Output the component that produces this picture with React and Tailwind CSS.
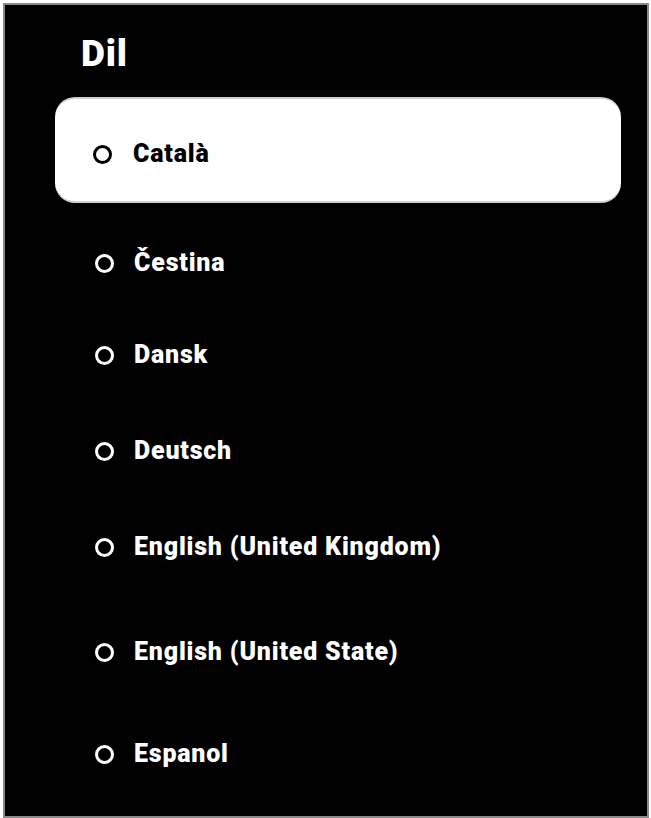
import React from "react";

const languages = [
  { name: "Català", selected: true },
  { name: "Čestina", space: "mt-[40px]" },
  { name: "Dansk", space: "mt-[52px]" },
  { name: "Deutsch", space: "mt-[56px]" },
  { name: "English (United Kingdom)", space: "mt-[56px]" },
  { name: "English (United State)", space: "mt-[65px]" },
  { name: "Espanol", space: "mt-[62px]" },
];

function Radio({ dark }) {
  return (
    <span
      className={`inline-block w-[19px] h-[19px] rounded-full border-[3.5px] shrink-0 ${
        dark ? "border-black" : "border-white"
      }`}
    />
  );
}

export default function App() {
  return (
    <div className="min-h-screen bg-white pt-[3px] pl-[3px]" style={{ fontFamily: "Roboto, 'Liberation Sans', sans-serif" }}>
      <div className="w-[646px] h-[815px] bg-black border-2 border-[#8a8a8a] flex flex-col overflow-hidden">
        <h1 className="mt-[31px] ml-[76px] text-[37px] leading-[36px] font-black text-white tracking-[0.8px]">
          Dil
        </h1>

        <div className="mt-[25px] flex flex-col">
          {languages.map((lang) =>
            lang.selected ? (
              <div
                key={lang.name}
                className="ml-[50px] w-[566px] h-[106px] bg-white rounded-[20px] border-y-2 border-[#cfcfcf] flex items-center gap-[21px] pl-[38px] pt-[8px]"
              >
                <Radio dark />
                <span className="text-[25px] leading-[40px] font-black text-black tracking-[0.8px]">{lang.name}</span>
              </div>
            ) : (
              <div
                key={lang.name}
                className={`${lang.space} h-[40px] flex items-center gap-[20px] pl-[90px]`}
              >
                <Radio />
                <span className="text-[25px] leading-[40px] font-black text-white tracking-[0.8px]">{lang.name}</span>
              </div>
            )
          )}
        </div>
      </div>
    </div>
  );
}
